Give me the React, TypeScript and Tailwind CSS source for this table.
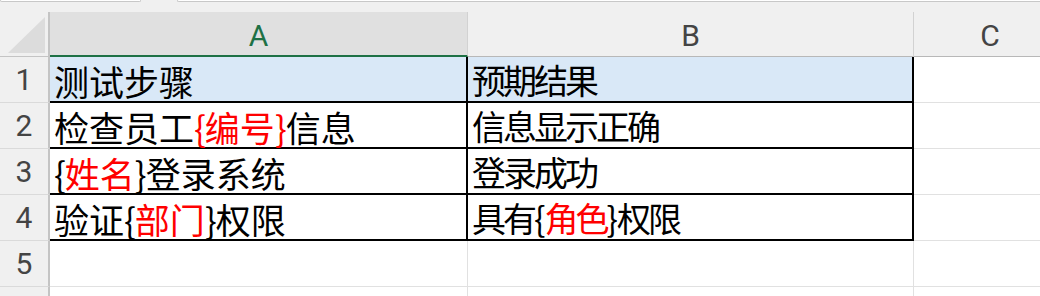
import React from "react";

type Seg = { t: string; red?: boolean };

const CJK = { fontFamily: '"Noto Sans CJK SC", "Noto Sans", sans-serif' };
const HEAD = { fontFamily: 'Roboto, "Liberation Sans", sans-serif' };

// 把 "{xx}" 拆成片段: 红色片段用 r()
const k = (t: string): Seg => ({ t });
const r = (t: string): Seg => ({ t, red: true });

const rows: { a: Seg[]; b: Seg[]; head?: boolean }[] = [
  { a: [k("测试步骤")], b: [k("预期结果")], head: true },
  { a: [k("检查员工"), r("{编号}"), k("信息")], b: [k("信息显示正确")] },
  { a: [k("{"), r("姓名"), k("}登录系统")], b: [k("登录成功")] },
  { a: [k("验证{"), r("部门"), k("}权限")], b: [k("具有{"), r("角色"), k("}权限")] },
];

function Text({ segs, wide }: { segs: Seg[]; wide?: boolean }) {
  // 括号不加字距, A 列字更宽
  const parts: React.ReactNode[] = [];
  segs.forEach((s, i) => {
    s.t.split(/([{}])/).forEach((p, j) => {
      if (!p) return;
      const brace = p === "{" || p === "}";
      parts.push(
        <span
          key={`${i}-${j}`}
          className={`${s.red ? "text-[#ff0000]" : "text-black"} ${
            brace ? "tracking-[-1px]" : wide ? "tracking-[0px]" : "tracking-[-3px]"
          }`}
        >
          {p}
        </span>
      );
    });
  });
  return (
    <span
      className={`whitespace-nowrap leading-none ${wide ? "text-[35px]" : "text-[34px]"}`}
      style={CJK}
    >
      {parts}
    </span>
  );
}

function RowHead({ n }: { n?: number }) {
  return (
    <div
      className="w-[50px] shrink-0 h-full flex items-center justify-center bg-[#f0f0f0] border-r-2 border-r-[#c4c4c4] border-b border-b-[#dadada] text-[30px] text-[#444]"
      style={HEAD}
    >
      {n}
    </div>
  );
}

export default function App() {
  return (
    <div className="w-[1040px] h-[296px] overflow-hidden bg-white">
      {/* 名称框 / 编辑栏 底边 */}
      <div className="h-[12px] bg-[#f0f0f0] flex">
        <div className="w-[147px] h-[2px] bg-white border-b border-x border-[#c8c8c8] rounded-b-[2px]" />
        <div className="ml-[36px] w-[900px] h-[2px] bg-white border-b border-l border-[#c8c8c8] rounded-bl-[2px]" />
      </div>

      {/* 列标题 */}
      <div className="flex h-[45px]" style={HEAD}>
        <div className="w-[50px] shrink-0 bg-[#f0f0f0] border-r-2 border-r-[#c4c4c4] border-b border-b-[#c4c4c4] flex items-end justify-end pr-[3px] pb-[3px]">
          <svg width="37" height="36" viewBox="0 0 37 36">
            <polygon points="37,0 37,36 0,36" fill="#dcdcdc" />
          </svg>
        </div>
        <div className="w-[418px] shrink-0 bg-[#e0e0e0] border-r border-r-[#d2d2d2] border-b-2 border-b-[#1e7145] flex items-center justify-center pt-[4px] text-[30px] text-[#1e7145]">
          A
        </div>
        <div className="w-[446px] shrink-0 bg-[#f0f0f0] border-r border-r-[#d2d2d2] border-b border-b-[#b8b8b8] flex items-center justify-center pt-[3px] text-[30px] text-[#444]">
          B
        </div>
        <div className="w-[152px] shrink-0 bg-[#f0f0f0] border-b border-b-[#b8b8b8] flex items-center justify-center pt-[3px] text-[30px] text-[#444]">
          C
        </div>
      </div>

      {/* 数据行 */}
      {rows.map((row, i) => (
        <div key={i} className="flex h-[46px]">
          <RowHead n={i + 1} />
          <div
            className={`w-[418px] shrink-0 h-full flex items-center pl-[4px] pt-[2px] border-r-2 border-r-black border-b-2 border-b-black ${
              row.head ? "bg-[#d9e8f7]" : "bg-white"
            }`}
          >
            <Text segs={row.a} wide />
          </div>
          <div
            className={`w-[446px] shrink-0 h-full flex items-center pl-[4px] pt-[2px] border-r-2 border-r-black border-b-2 border-b-black ${
              row.head ? "bg-[#d9e8f7]" : "bg-white"
            }`}
          >
            <Text segs={row.b} />
          </div>
          <div className="w-[152px] shrink-0 h-full border-b border-b-[#e1e1e1]" />
        </div>
      ))}

      {[5, 0].map((n) => (
        <div key={n} className="flex h-[46px]">
          <RowHead n={n || undefined} />
          <div className="w-[418px] shrink-0 h-full border-r border-r-[#e1e1e1] border-b border-b-[#e1e1e1]" />
          <div className="w-[446px] shrink-0 h-full border-r border-r-[#e1e1e1] border-b border-b-[#e1e1e1]" />
          <div className="w-[152px] shrink-0 h-full border-b border-b-[#e1e1e1]" />
        </div>
      ))}
    </div>
  );
}
